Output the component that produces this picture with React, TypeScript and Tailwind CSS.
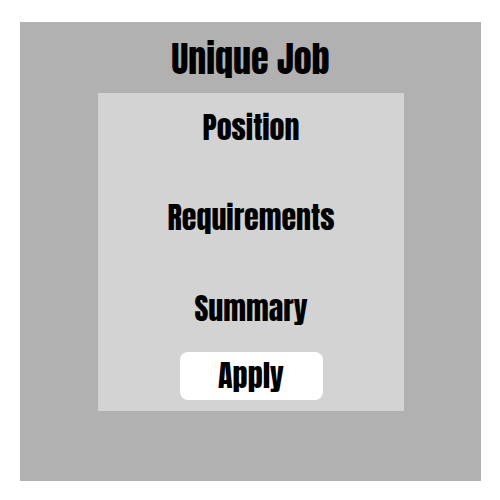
export default function App() {
  const f = { fontFamily: 'Impact, "Anton", "Liberation Sans Narrow", "DejaVu Sans Condensed", sans-serif' };
  return (
    <div className="w-[500px] h-[500px] bg-white pt-[22px] pl-[20px]" style={f}>
      <div className="w-[461px] h-[459px] bg-[#b1b1b1] flex flex-col items-center">
        <h1 className="text-[36px] leading-none mt-[19px] h-[52px] text-black">Unique Job</h1>
        <div className="w-[306px] h-[318px] ml-[1px] bg-[#d3d3d3] flex flex-col items-center">
          <h2 className="text-[30px] leading-none mt-[20px]">Position</h2>
          <h2 className="text-[30px] leading-none mt-[60px]">Requirements</h2>
          <h2 className="text-[30px] leading-none mt-[61px]">Summary</h2>
          <button className="mt-[28px] w-[143px] h-[48px] bg-white rounded-[8px] text-[30px] leading-none">Apply</button>
        </div>
      </div>
    </div>
  );
}
